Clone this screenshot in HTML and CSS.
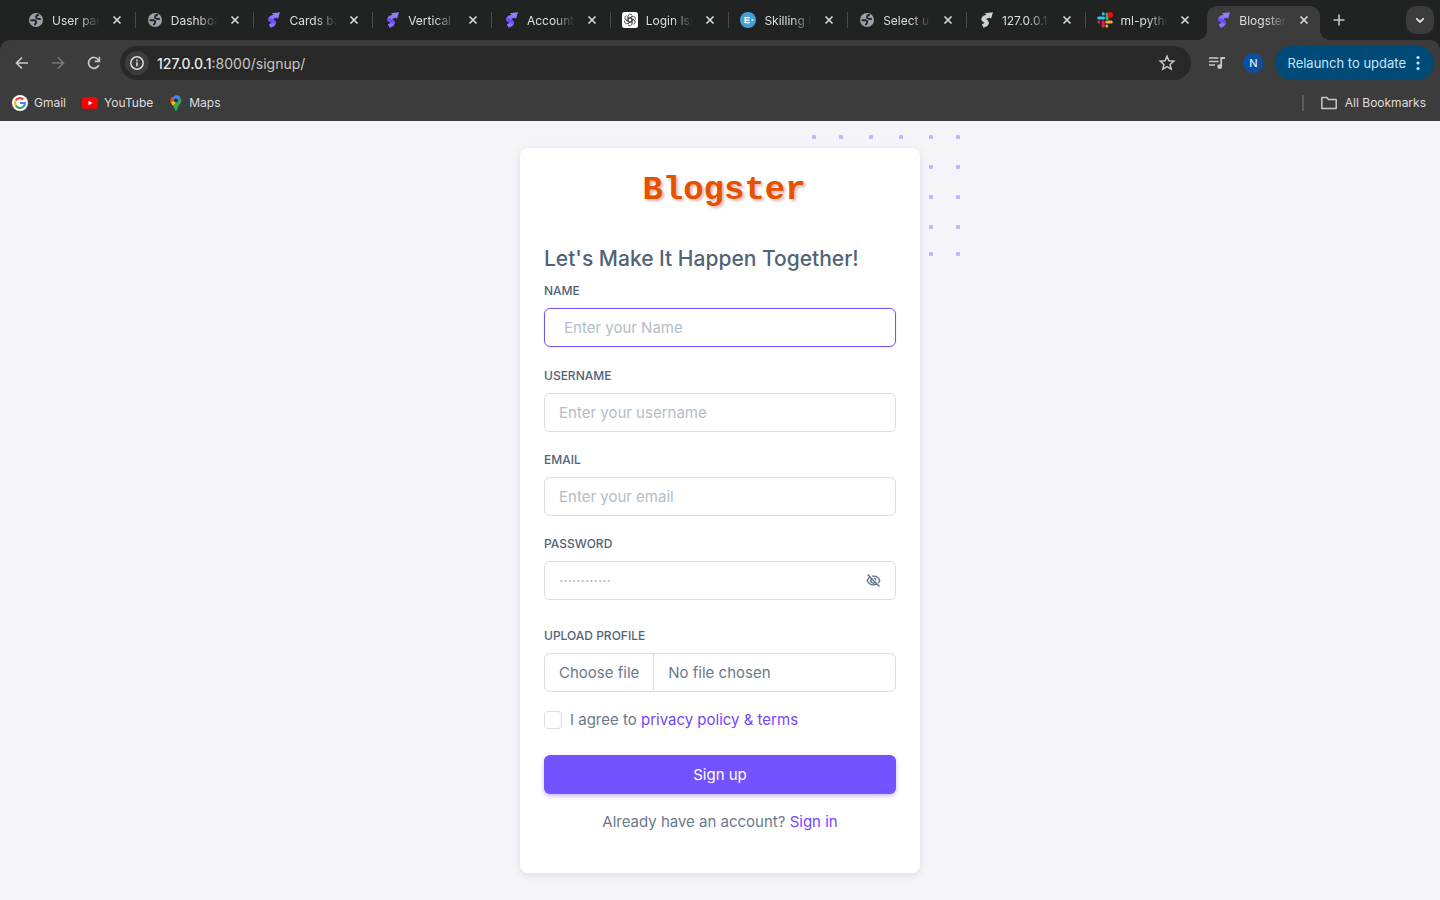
FILE: index.html
```html
<!DOCTYPE html>
<html lang="en">
<head>
<meta charset="utf-8">
<meta name="viewport" content="width=device-width, initial-scale=1">
<title>Blogster</title>
<link rel="stylesheet" href="styles.css">
</head>
<body>
<svg class="defs" width="0" height="0" aria-hidden="true">
  <symbol id="globe" viewBox="0 0 16 16"><circle cx="8" cy="8" r="7" fill="#9aa0aa"/><path d="M2.500 8.200h3.700q2.200.2 2 1.800t-1.800 3M10.800 3q-3.200.3-2.700 2.500.6 1.700 4.700 1.500" fill="none" stroke="#202322" stroke-width="1.900"/></symbol>
  <symbol id="sneat" viewBox="0 0 16 16"><path d="M11 3.800 6.500 5.500Q3.800 7.200 7 8.800 10.300 10.800 8 12.500L4.700 14" fill="none" stroke="#8577ff" stroke-width="4"/><path d="M6.800 1.200 15 .300 13 6.800Z" fill="#8f80ff"/><path d="M3.800 7Q4.500 8 7 8.800 9.500 10 9.300 11.500" fill="none" stroke="#6c48ff" stroke-width="3.400"/></symbol>
  <symbol id="sneat-light" viewBox="0 0 16 16"><path d="M11 3.800 6.500 5.500Q3.800 7.200 7 8.800 10.300 10.800 8 12.500L4.700 14" fill="none" stroke="#d0d0d0" stroke-width="4"/><path d="M6.800 1.200 15 .300 13 6.800Z" fill="#d0d0d0"/></symbol>
  <symbol id="x" viewBox="0 0 16 16"><path d="M4.500 4.500l7 7M11.500 4.500l-7 7" stroke="#dcdcdc" stroke-width="1.600"/></symbol>
</svg>
<header class="browser">
  <div class="strip">
    <div class="tabs">
      <div class="tab"><svg class="fav"><use href="#globe"/></svg><span class="title">User panel</span><button class="close" aria-label="Close tab"><svg><use href="#x"/></svg></button></div>
      <div class="tab"><svg class="fav"><use href="#globe"/></svg><span class="title">Dashboard</span><button class="close" aria-label="Close tab"><svg><use href="#x"/></svg></button></div>
      <div class="tab"><svg class="fav"><use href="#sneat"/></svg><span class="title">Cards basic</span><button class="close" aria-label="Close tab"><svg><use href="#x"/></svg></button></div>
      <div class="tab"><svg class="fav"><use href="#sneat"/></svg><span class="title">Vertical Layouts</span><button class="close" aria-label="Close tab"><svg><use href="#x"/></svg></button></div>
      <div class="tab"><svg class="fav"><use href="#sneat"/></svg><span class="title">Account settings</span><button class="close" aria-label="Close tab"><svg><use href="#x"/></svg></button></div>
      <div class="tab"><svg class="fav" viewBox="0 0 16 16"><rect width="16" height="16" rx="2.500" fill="#fff"/><g fill="none" stroke="#333" stroke-width=".8"><g id="petal"><path d="M6 9.200V4.500a2.300 2.300 0 0 1 4-1.500M6 6.900l4-2.300"/></g><use href="#petal" transform="rotate(60 8 8)"/><use href="#petal" transform="rotate(120 8 8)"/><use href="#petal" transform="rotate(180 8 8)"/><use href="#petal" transform="rotate(240 8 8)"/><use href="#petal" transform="rotate(300 8 8)"/></g></svg><span class="title">Login Issue</span><button class="close" aria-label="Close tab"><svg><use href="#x"/></svg></button></div>
      <div class="tab"><svg class="fav" viewBox="0 0 16 16"><circle cx="8" cy="8" r="8" fill="#43a1d5"/><path d="M10 5.600H5.200v5H10M5.200 8.100H9.500" stroke="#fff" stroke-width="1.400" fill="none"/><circle cx="12.400" cy="8.100" r="1" fill="#fff"/></svg><span class="title">Skilling Page</span><button class="close" aria-label="Close tab"><svg><use href="#x"/></svg></button></div>
      <div class="tab"><svg class="fav"><use href="#globe"/></svg><span class="title">Select user</span><button class="close" aria-label="Close tab"><svg><use href="#x"/></svg></button></div>
      <div class="tab"><svg class="fav"><use href="#sneat-light"/></svg><span class="title">127.0.0.1:8000</span><button class="close" aria-label="Close tab"><svg><use href="#x"/></svg></button></div>
      <div class="tab"><svg class="fav" viewBox="0 0 16 16"><g fill="none" stroke-width="3" stroke-linecap="round"><path d="M1.700 6h4.800M6.300 1.700v.300" stroke="#36c5f0"/><path d="M10 2v4.500" stroke="#2eb67d"/><path d="M9.800 10h4.500M9.800 14v.100" stroke="#ecb22e"/><path d="M6.200 9.800v4.500M1.700 10h.200" stroke="#e01e5a"/></g><circle cx="13.300" cy="2.900" r="2.800" fill="#f20d0d"/></svg><span class="title">ml-python</span><button class="close" aria-label="Close tab"><svg><use href="#x"/></svg></button></div>
      <div class="tab active"><svg class="fav"><use href="#sneat"/></svg><span class="title">Blogster |</span><button class="close" aria-label="Close tab"><svg><use href="#x"/></svg></button></div>
    </div>
    <button class="new-tab" aria-label="New tab"><svg width="16" height="16" viewBox="0 0 16 16"><path d="M8 2.500v11M2.500 8h11" stroke="#c7c7c7" stroke-width="1.600"/></svg></button>
    <button class="tab-search" aria-label="Search tabs"><svg width="16" height="16" viewBox="0 0 16 16"><path d="M4.300 6.300 8 10l3.700-3.700" fill="none" stroke="#e3e3e3" stroke-width="1.800"/></svg></button>
  </div>
  <div class="toolbar">
    <div class="nav">
      <button aria-label="Back"><svg width="16" height="16" viewBox="0 0 16 16"><path d="M14 8H3M8 2.500 2.500 8 8 13.500" fill="none" stroke="#c7c7c7" stroke-width="1.700"/></svg></button>
      <button aria-label="Forward"><svg width="16" height="16" viewBox="0 0 16 16"><path d="M2 8h11M8 2.500 13.500 8 8 13.500" fill="none" stroke="#777" stroke-width="1.700"/></svg></button>
      <button aria-label="Reload"><svg width="16" height="16" viewBox="0 0 16 16"><path d="M12.800 10.200A5.400 5.400 0 1 1 12.300 4.700L13.500 6.200" fill="none" stroke="#c7c7c7" stroke-width="1.700"/><path d="M14.200 1.700v5.500H8.700V5.600h3.900V1.700z" fill="#c7c7c7"/></svg></button>
    </div>
    <div class="omnibox">
      <button class="info" aria-label="Site information"><svg width="16" height="16" viewBox="0 0 16 16"><circle cx="8" cy="8" r="6.200" fill="none" stroke="#dcdcdc" stroke-width="1.500"/><path d="M8 7.300v4M8 4.500v1.700" stroke="#dcdcdc" stroke-width="1.600"/></svg></button>
      <span class="url"><b>127.0.0.1</b>:8000/signup/</span>
      <button class="star" aria-label="Bookmark this page"><svg width="18" height="18" viewBox="0 0 18 18"><path d="M9 2.300l1.900 4.500 4.900.400-3.700 3.200 1.100 4.800L9 12.700l-4.200 2.500 1.100-4.800L2.200 7.200l4.900-.4z" fill="none" stroke="#c7c7c7" stroke-width="1.500"/></svg></button>
    </div>
    <button class="media" aria-label="Media controls"><svg width="18" height="16" viewBox="0 0 18 16"><path d="M1 3h9.500M1 6.500h9.500M1 10h6" stroke="#c7c7c7" stroke-width="1.600"/><path d="M13.200 11.500V3H17" fill="none" stroke="#c7c7c7" stroke-width="1.800"/><circle cx="11.700" cy="11.700" r="2.400" fill="#c7c7c7"/></svg></button>
    <button class="avatar" aria-label="Profile">N</button>
    <button class="relaunch">Relaunch to update<svg width="4" height="16" viewBox="0 0 4 16" fill="#c2e7ff"><circle cx="2" cy="2.500" r="1.600"/><circle cx="2" cy="8" r="1.600"/><circle cx="2" cy="13.500" r="1.600"/></svg></button>
  </div>
  <nav class="bookmarks" aria-label="Bookmarks">
    <a href="#"><svg width="16" height="16" viewBox="0 0 16 16"><circle cx="8" cy="8" r="8" fill="#fff"/><g fill="none" stroke-width="2.200"><path d="M3.700 5.500A5 5 0 0 1 11.500 4.500" stroke="#ea4335"/><path d="M3.700 5.500a5 5 0 0 0 0 5" stroke="#fbbc05"/><path d="M3.700 10.500a5 5 0 0 0 7.400 1.400" stroke="#34a853"/><path d="M11.100 11.900A5 5 0 0 0 12.900 8H8" stroke="#4285f4"/></g></svg>Gmail</a>
    <a href="#"><svg width="16" height="16" viewBox="0 0 16 16"><rect y="2.300" width="16" height="11.500" rx="2.500" fill="#f00"/><path d="M6.500 5.800v4.500l4-2.250z" fill="#fff"/></svg>YouTube</a>
    <a href="#"><svg width="14" height="16" viewBox="1 0 14 16"><path d="M8 0a5.500 5.500 0 0 1 4.800 2.800L6 10 4 3z" fill="#4285f4"/><path d="M4 1.700 7 5 3.300 8.500A5.500 5.500 0 0 1 4 1.700z" fill="#ea4335"/><path d="M6.500 5.500 2.900 7.500 5 11l5-5z" fill="#fbbc04"/><path d="M12.900 2.900c1.200 2.700.1 4.800-1.400 6.700C9.500 12 9.300 16 8 16s-1.300-3-3-5z" fill="#34a853"/><circle cx="8" cy="5.500" r="2" fill="#25324d"/></svg>Maps</a>
    <a href="#" class="all"><svg width="18" height="16" viewBox="0 0 18 16"><path d="M1.800 2.500h5l1.700 2h7.700v9H1.800z" fill="none" stroke="#c7c7c7" stroke-width="1.500" stroke-linejoin="round"/></svg>All Bookmarks</a>
  </nav>
</header>
<main class="page">
  <div class="wrap">
    <svg class="dots" width="148" height="121" viewBox="0 0 148 121" fill="#c3b5fd" aria-hidden="true"><g id="row"><rect width="4" height="4" rx="1"/><rect x="27" width="4" height="4" rx="1"/><rect x="57" width="4" height="4" rx="1"/><rect x="87" width="4" height="4" rx="1"/><rect x="117" width="4" height="4" rx="1"/><rect x="144" width="4" height="4" rx="1"/></g><use href="#row" y="30"/><use href="#row" y="60"/><use href="#row" y="90"/><use href="#row" y="117"/></svg>
    <section class="card">
      <div class="logo">Blogster</div>
      <h1>Let's Make It Happen Together!</h1>
      <form>
        <div class="field first"><label for="name">Name</label><input class="control focused" id="name" type="text" placeholder="Enter your Name"></div>
        <div class="field"><label for="username">Username</label><input class="control" id="username" type="text" placeholder="Enter your username"></div>
        <div class="field"><label for="email">Email</label><input class="control" id="email" type="text" placeholder="Enter your email"></div>
        <div class="field password"><label for="password">Password</label>
          <div class="control merged"><input id="password" type="password" placeholder="············"><button type="button" aria-label="Show password"><svg width="15" height="15" viewBox="0 0 24 24"><path d="M2.500 2.500 21.500 21.500M7 6C4.500 7.300 3 9.500 2 12c1.800 4.500 5.700 7 10 7 1.700 0 3.300-.4 4.700-1.100M10 5.200C15.500 4.300 20 7 22 12c-.6 1.500-1.500 2.800-2.600 3.900M9 9a4 4 0 0 0 5.700 5.900M12.500 8.100a4 4 0 0 1 3.400 3.600" fill="none" stroke="#5f6f84" stroke-width="2.200"/></svg></button></div>
        </div>
        <div class="field"><label for="profile">Upload Profile</label>
          <label class="control file" for="profile"><input id="profile" type="file"><span class="choose">Choose file</span><span class="chosen">No file chosen</span></label>
        </div>
        <div class="terms"><input type="checkbox" id="terms"><label for="terms">I agree to <a href="#">privacy policy &amp; terms</a></label></div>
        <button class="submit" type="submit">Sign up</button>
      </form>
      <p class="signin">Already have an account? <a href="#">Sign in</a></p>
    </section>
  </div>
</main>
</body>
</html>
```
FILE: styles.css
```css
* { box-sizing: border-box; }
body { margin: 0; min-height: 100vh; display: flex; flex-direction: column; background: #f5f5f9; font-family: Inter, "Liberation Sans", sans-serif; font-size: 15px; color: #697a8d; }
button { border: 0; padding: 0; background: none; font: inherit; color: inherit; display: flex; align-items: center; justify-content: center; }
input { font: inherit; color: inherit; }
svg { display: block; flex: none; }
a { color: #7047fb; text-decoration: none; }
.defs { position: absolute; }

.browser { background: #202322; color: #dedede; font-size: 12px; }
.strip { display: flex; align-items: center; height: 40px; padding: 0 6px 0 17px; }
.tabs { display: flex; flex: 0 1 1306px; min-width: 0; height: 40px; }
.tab { position: relative; flex: 1; min-width: 0; display: flex; align-items: center; padding: 0 11px; isolation: isolate; }
.tab::after { content: ""; position: absolute; right: 0; top: 12px; width: 1px; height: 16px; background: #494b4a; }
.tab:nth-last-child(2)::after { display: none; }
.tab.active::after { left: -7px; right: -7px; top: auto; bottom: 0; width: auto; height: 10px; z-index: -1; background: radial-gradient(circle at 0 0, transparent 10px, #3c3c3c 10px) left / 10px 10px no-repeat, radial-gradient(circle at 100% 0, transparent 10px, #3c3c3c 10px) right / 10px 10px no-repeat; }
.tab.active::before { content: ""; position: absolute; inset: 6px 3px 0; background: #3c3c3c; border-radius: 10px 10px 0 0; z-index: -1; }
.fav { width: 16px; height: 16px; }
.title { flex: 1; min-width: 0; margin-left: 8px; overflow: hidden; white-space: nowrap; mask-image: linear-gradient(to right, #000 55%, transparent 98%); }
.close { width: 16px; height: 16px; margin: 0 0 0 8px; flex: none; }
.close svg { width: 16px; height: 16px; }
.new-tab { width: 32px; height: 32px; }
.tab-search { width: 28px; height: 28px; margin-left: auto; border-radius: 10px; background: #3c3c3c; }

.toolbar { display: flex; align-items: center; height: 46px; padding: 0 6px 0 14px; background: #3c3c3c; border-radius: 10px 10px 0 0; }
.nav { display: flex; gap: 20px; margin-right: 18px; }
.omnibox { flex: 1; min-width: 0; display: flex; align-items: center; height: 34px; padding: 0 15px 0 5px; background: #282828; border-radius: 17px; font-size: 14px; }
.info { width: 24px; height: 24px; border-radius: 12px; background: #3c3c3c; }
.url { flex: 1; margin-left: 8px; color: #c7c7c7; }
.url b { font-weight: 500; color: #e8e8e8; }
.media { margin: 0 17px; }
.avatar { width: 20px; height: 20px; border-radius: 10px; background: #0950a4; color: #fff; font-size: 11px; }
.relaunch { gap: 10px; height: 34px; margin-left: 12px; padding: 0 14px 0 12px; border-radius: 17px; background: #004a77; color: #c2e7ff; font-size: 13px; }
.bookmarks { display: flex; align-items: center; gap: 16px; height: 35px; padding: 0 14px 2px 12px; background: #3c3c3c; }
.bookmarks a { display: flex; align-items: center; gap: 6px; color: #dedede; }
.bookmarks .all { margin-left: auto; gap: 7px; }
.bookmarks .all::before { content: ""; width: 2px; height: 16px; margin-right: 9px; background: #5c5c5c; }

.page { flex: 1; display: flex; justify-content: center; align-items: flex-start; padding: 27px 16px; }
.wrap { position: relative; width: 100%; max-width: 400px; }
.dots { position: absolute; right: -40px; top: -13px; }
.card { position: relative; padding: 20px 24px 40px; background: #fff; border-radius: 8px; box-shadow: 0 2px 8px rgba(67, 89, 113, .14); }
.logo { padding-left: 8px; text-align: center; font: bold 34px/44px "Liberation Mono", monospace; color: #e65100; text-shadow: 2px 2px 3px rgba(139, 0, 0, .3); }
h1 { margin: 32px 0 8px; font-size: 21px; line-height: 30px; font-weight: 500; color: #516377; }
.field { margin-bottom: 19px; }
.field.first { margin-bottom: 20px; }
.field.password { margin-bottom: 27px; }
.field > label:first-child { display: block; margin-bottom: 8px; font-size: 12px; line-height: 18px; font-weight: 500; text-transform: uppercase; color: #516377; }
.control { display: flex; width: 100%; height: 39px; padding: 0 14px; border: 1px solid #d9dee3; border-radius: 6px; background: #fff; outline: 0; }
.control.focused { padding-left: 19px; border-color: #7352fb; box-shadow: 0 0 3px rgba(115, 82, 251, .12); }
::placeholder { color: #b4bdc6; opacity: 1; }
.merged { align-items: center; }
.merged input { flex: 1; min-width: 0; padding: 0; border: 0; outline: 0; }
.file { position: relative; align-items: center; padding: 0; }
.file input { position: absolute; inset: 0; width: 100%; opacity: 0; }
.choose { display: flex; align-items: center; height: 37px; padding: 0 14px; border-right: 1px solid #d9dee3; }
.chosen { padding-left: 14px; }
.terms { display: flex; align-items: center; gap: 8px; margin-bottom: 26px; line-height: 18px; }
.terms input { appearance: none; width: 18px; height: 18px; margin: 0; border: 1px solid #d9dee3; border-radius: 4px; background: #fff; }
.submit { width: 100%; height: 39px; border-radius: 6px; background: #7353ff; color: #fff; box-shadow: 0 2px 4px rgba(115, 83, 255, .4); }
.signin { margin: 16px 0 0; text-align: center; line-height: 23px; }
```
